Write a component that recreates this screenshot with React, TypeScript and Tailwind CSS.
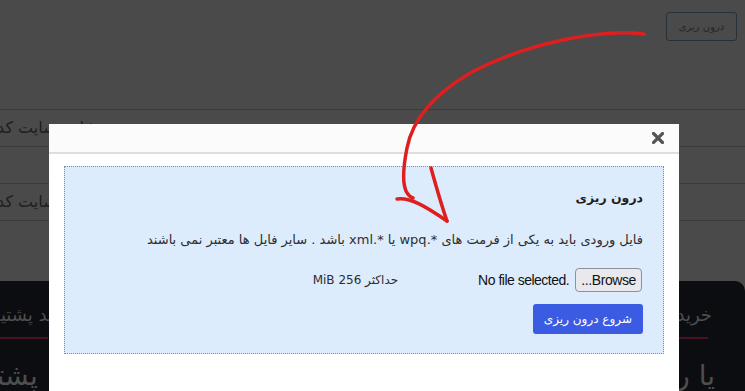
import React from "react";

const fa = { fontFamily: '"DejaVu Sans", "Noto Sans", sans-serif' };

function BgRow({ text, showText }: { text: string; showText: boolean }) {
  return (
    <div className="flex h-[37px] items-center overflow-hidden border-b border-[#3b3b3b]">
      {showText ? (
        <span
          dir="rtl"
          className="-ml-[3px] whitespace-nowrap text-[16px] text-[#1e1e1e]"
          style={fa}
        >
          {text}
        </span>
      ) : null}
    </div>
  );
}

export default function App() {
  return (
    <div className="relative h-[391px] w-[745px] overflow-hidden bg-[#4a4a4a]" style={fa}>
      {/* background page (dimmed) */}
      <div className="flex flex-col">
        <div className="flex h-[110px] items-start justify-end border-b border-[#3b3b3b] pr-[8px] pt-[12px]">
          <button
            dir="rtl"
            className="flex h-[29px] w-[71px] items-center justify-center rounded-[3px] border border-[#27313a] text-[10px] text-[#262626]"
          >
            درون ریزی
          </button>
        </div>
        <BgRow text="نشانی سایت کد" showText={true} />
        <BgRow text="" showText={false} />
        <BgRow text="نشانی سایت کد" showText={true} />
        <div className="h-[60px]" />
        <div className="flex h-[110px] flex-col rounded-tr-[10px] bg-[#0c0d10]">
          <div className="flex h-[67px] items-end justify-between overflow-hidden">
            <div className="flex flex-col">
              <span dir="rtl" className="-ml-[30px] whitespace-nowrap pb-[10px] text-[18px] leading-[24px] text-[#4e4e4e]">
                تمدید پشتیبانی
              </span>
              <div className="h-[2px] w-[48px] bg-[#4b1022]" />
            </div>
            <div className="mr-[33px] flex flex-col">
              <span dir="rtl" className="whitespace-nowrap pb-[10px] text-[18px] leading-[24px] text-[#4e4e4e]">
                خرید
              </span>
              <div className="h-[2px] w-[32px] bg-[#4b1022]" />
            </div>
          </div>
          <div className="flex items-center justify-between overflow-hidden pt-[22px]">
            <span dir="rtl" className="-ml-[60px] whitespace-nowrap text-[28px] leading-[34px] text-[#4e4e4e]">
              پشتیبانی
            </span>
            <span dir="rtl" className="mr-[30px] whitespace-nowrap text-[28px] leading-[34px] text-[#4e4e4e]">
              یا راهنما
            </span>
          </div>
        </div>
      </div>

      {/* modal */}
      <div className="absolute left-[49px] top-[124px] h-[300px] w-[630px] bg-white">
        <div className="flex h-[30px] items-center justify-end border-b-2 border-[#dedede] bg-[#fbfbfb] pr-[15px]">
          <svg width="12" height="12" viewBox="0 0 12 12">
            <path d="M1.5 1.5 L10.5 10.5 M10.5 1.5 L1.5 10.5" stroke="#555" strokeWidth="3.2" strokeLinecap="square" />
          </svg>
        </div>
        <div className="px-[15px] pt-[12px]">
          <div
            dir="rtl"
            className="flex h-[188px] flex-col items-start border border-dotted border-[#7f8b98] bg-[#ddecfc] px-[20px] pt-[22px]"
          >
            <h4 className="text-[12.5px] font-bold leading-[18px] text-[#1f1f1f]">درون ریزی</h4>
            <p className="mt-[24px] text-[13px] leading-[18px] text-[#2e2e2e]">
              فایل ورودی باید به یکی از فرمت های *.wpq یا *.xml باشد . سایر فایل ها معتبر نمی باشند
            </p>
            <div className="mt-[19px] flex items-center">
              <span
                className="mr-[1px] flex h-[24px] items-center rounded-[4px] border border-[#8f8f9d] bg-[#e9e9ed] px-[5px] text-[14px] tracking-[-0.4px] text-[#111]"
                style={{ fontFamily: '"Liberation Sans", Arial, sans-serif' }}
              >
                Browse...
              </span>
              <span
                dir="ltr"
                className="mr-[6px] text-[14px] tracking-[-0.5px] text-[#111]"
                style={{ fontFamily: '"Liberation Sans", Arial, sans-serif' }}
              >
                No file selected.
              </span>
              <span className="mr-[80px] text-[12px] text-[#2e2e2e]">حداکثر 256 MiB</span>
            </div>
            <button className="mt-[12px] flex h-[30px] items-center rounded-[3px] bg-[#3b5be3] px-[11px] text-[12px] text-white">
              شروع درون ریزی
            </button>
          </div>
        </div>
      </div>

      {/* hand-drawn red arrow */}
      <svg
        className="pointer-events-none absolute left-0 top-0"
        width="745"
        height="391"
        viewBox="0 0 745 391"
        fill="none"
      >
        <path
          d="M644 34 C600 28 525 44 472 72 C432 95 412 122 407 148 C403 168 403 184 406 191 C408 195 410 197 413 198"
          stroke="#dd1f1f"
          strokeWidth="3.5"
          strokeLinecap="round"
        />
        <path d="M397 199 C410 197 425 206 447 221" stroke="#dd1f1f" strokeWidth="3.5" strokeLinecap="round" />
        <path d="M431 168 C436 186 441 204 447 221" stroke="#dd1f1f" strokeWidth="3.5" strokeLinecap="round" />
      </svg>
    </div>
  );
}
